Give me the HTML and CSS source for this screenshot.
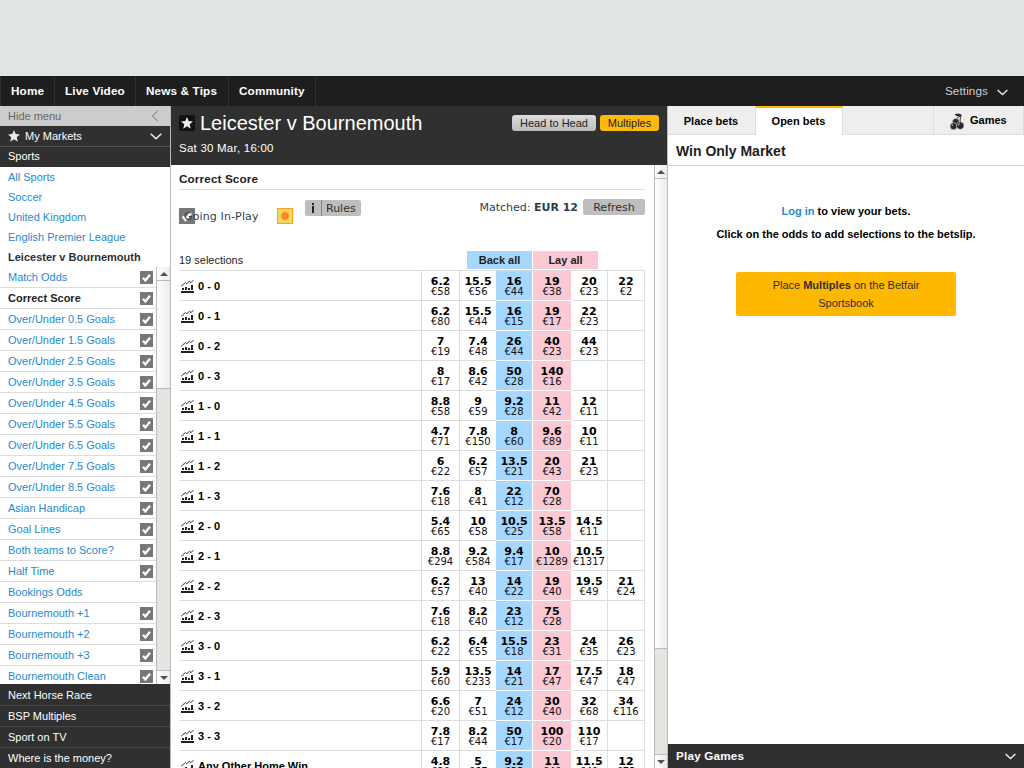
FILE: index.html
```html
<!DOCTYPE html>
<html lang="en">
<head>
<meta charset="utf-8">
<title>Leicester v Bournemouth</title>
<link rel="stylesheet" href="styles.css">
</head>
<body>
<svg class="defs" width="0" height="0">
<symbol id="check" viewBox="0 0 13 13"><path fill="#777" d="M0 0h13v13H0z"/><path d="M3 6.800l2.300 2.600L10 3.700" fill="none" stroke="#fff" stroke-width="2.300"/></symbol>
<symbol id="graph" viewBox="0 0 13 13"><path d="M0 11h13v2H0zM1 8h2v2H1zM4 7h2v3H4zM7 8h2v2H7zM10 5h2v5h-2z" fill="#222"/><path d="M.3 6.200L4.500 2.500 5.800 3.800 8.500 1.200 9.700 2.700 12.700.2" fill="none" stroke="#222" stroke-width=".9"/></symbol>
<symbol id="star" viewBox="0 0 12 12"><path d="M6 0l1.700 4.100 4.300.3-3.300 2.800 1.100 4.500L6 9.300l-3.800 2.400 1.100-4.500L0 4.400l4.300-.3z" fill="#e8eceb"/></symbol>
<symbol id="down" viewBox="0 0 12 7"><path d="M.7.7L6 5.800 11.300.7" fill="none" stroke="#eee" stroke-width="1.500"/></symbol>
</svg>
<div class="page">
<div class="banner"></div>
<nav class="nav"><a>Home</a><a>Live Video</a><a>News &amp; Tips</a><a>Community</a><span class="settings">Settings<svg width="11" height="7"><use href="#down"/></svg></span></nav>
<div class="columns">
<aside class="side">
<div class="hide">Hide menu<svg width="8" height="12" viewBox="0 0 8 12"><path d="M7 .7L1.200 6 7 11.300" fill="none" stroke="#999" stroke-width="1.200"/></svg></div>
<div class="dark my"><svg width="12" height="12"><use href="#star"/></svg><span>My Markets</span><svg class="end" width="12" height="7"><use href="#down"/></svg></div>
<div class="dark sports">Sports</div>
<div class="crumbs"><a>All Sports</a><a>Soccer</a><a>United Kingdom</a><a>English Premier League</a><b>Leicester v Bournemouth</b></div>
<div class="marketwrap">
<ul class="markets">
<li>Match Odds<svg><use href="#check"/></svg></li>
<li class="on">Correct Score<svg><use href="#check"/></svg></li>
<li>Over/Under 0.5 Goals<svg><use href="#check"/></svg></li>
<li>Over/Under 1.5 Goals<svg><use href="#check"/></svg></li>
<li>Over/Under 2.5 Goals<svg><use href="#check"/></svg></li>
<li>Over/Under 3.5 Goals<svg><use href="#check"/></svg></li>
<li>Over/Under 4.5 Goals<svg><use href="#check"/></svg></li>
<li>Over/Under 5.5 Goals<svg><use href="#check"/></svg></li>
<li>Over/Under 6.5 Goals<svg><use href="#check"/></svg></li>
<li>Over/Under 7.5 Goals<svg><use href="#check"/></svg></li>
<li>Over/Under 8.5 Goals<svg><use href="#check"/></svg></li>
<li>Asian Handicap<svg><use href="#check"/></svg></li>
<li>Goal Lines<svg><use href="#check"/></svg></li>
<li>Both teams to Score?<svg><use href="#check"/></svg></li>
<li>Half Time<svg><use href="#check"/></svg></li>
<li>Bookings Odds</li>
<li>Bournemouth +1<svg><use href="#check"/></svg></li>
<li>Bournemouth +2<svg><use href="#check"/></svg></li>
<li>Bournemouth +3<svg><use href="#check"/></svg></li>
<li>Bournemouth Clean<svg><use href="#check"/></svg></li>
</ul>
<div class="scroll small"><i class="up"></i><i class="thumb"></i><i class="track"></i><i class="dn"></i></div>
</div>
<div class="links"><a>Next Horse Race</a><a>BSP Multiples</a><a>Sport on TV</a><a>Where is the money?</a></div>
</aside>
<main class="main">
<header class="event">
<div class="titlerow"><span class="fav"><svg width="12" height="12"><use href="#star"/></svg></span><h1>Leicester v Bournemouth</h1><span class="btn grey">Head to Head</span><span class="btn gold">Multiples</span></div>
<div class="date">Sat 30 Mar, 16:00</div>
</header>
<div class="body">
<section class="market">
<h2>Correct Score</h2>
<div class="info">
<div class="inplay"><svg width="16" height="16" viewBox="0 0 13 13"><use href="#check"/></svg><span>Going In-Play</span></div>
<i class="dot"></i>
<span class="rules"><b></b><span>Rules</span></span>
<span class="matched">Matched: <b>EUR 12</b></span><span class="refresh">Refresh</span>
</div>
<div class="allrow"><span class="count">19 selections</span><b class="backall">Back all</b><b class="layall">Lay all</b></div>
<table class="odds">
<colgroup><col class="cn"><col class="c1"><col class="c2"><col class="c3"><col class="c4"><col class="c5"><col class="c6"></colgroup>
<tr><th><svg><use href="#graph"/></svg>0 - 0</th><td><b>6.2</b>€58</td><td><b>15.5</b>€56</td><td><b>16</b>€44</td><td><b>19</b>€38</td><td><b>20</b>€23</td><td><b>22</b>€2</td></tr>
<tr><th><svg><use href="#graph"/></svg>0 - 1</th><td><b>6.2</b>€80</td><td><b>15.5</b>€44</td><td><b>16</b>€15</td><td><b>19</b>€17</td><td><b>22</b>€23</td><td></td></tr>
<tr><th><svg><use href="#graph"/></svg>0 - 2</th><td><b>7</b>€19</td><td><b>7.4</b>€48</td><td><b>26</b>€44</td><td><b>40</b>€23</td><td><b>44</b>€23</td><td></td></tr>
<tr><th><svg><use href="#graph"/></svg>0 - 3</th><td><b>8</b>€17</td><td><b>8.6</b>€42</td><td><b>50</b>€28</td><td><b>140</b>€16</td><td></td><td></td></tr>
<tr><th><svg><use href="#graph"/></svg>1 - 0</th><td><b>8.8</b>€58</td><td><b>9</b>€59</td><td><b>9.2</b>€28</td><td><b>11</b>€42</td><td><b>12</b>€11</td><td></td></tr>
<tr><th><svg><use href="#graph"/></svg>1 - 1</th><td><b>4.7</b>€71</td><td><b>7.8</b>€150</td><td><b>8</b>€60</td><td><b>9.6</b>€89</td><td><b>10</b>€11</td><td></td></tr>
<tr><th><svg><use href="#graph"/></svg>1 - 2</th><td><b>6</b>€22</td><td><b>6.2</b>€57</td><td><b>13.5</b>€21</td><td><b>20</b>€43</td><td><b>21</b>€23</td><td></td></tr>
<tr><th><svg><use href="#graph"/></svg>1 - 3</th><td><b>7.6</b>€18</td><td><b>8</b>€41</td><td><b>22</b>€12</td><td><b>70</b>€28</td><td></td><td></td></tr>
<tr><th><svg><use href="#graph"/></svg>2 - 0</th><td><b>5.4</b>€65</td><td><b>10</b>€58</td><td><b>10.5</b>€25</td><td><b>13.5</b>€58</td><td><b>14.5</b>€11</td><td></td></tr>
<tr><th><svg><use href="#graph"/></svg>2 - 1</th><td><b>8.8</b>€294</td><td><b>9.2</b>€584</td><td><b>9.4</b>€17</td><td><b>10</b>€1289</td><td><b>10.5</b>€1317</td><td></td></tr>
<tr><th><svg><use href="#graph"/></svg>2 - 2</th><td><b>6.2</b>€57</td><td><b>13</b>€40</td><td><b>14</b>€22</td><td><b>19</b>€40</td><td><b>19.5</b>€49</td><td><b>21</b>€24</td></tr>
<tr><th><svg><use href="#graph"/></svg>2 - 3</th><td><b>7.6</b>€18</td><td><b>8.2</b>€40</td><td><b>23</b>€12</td><td><b>75</b>€28</td><td></td><td></td></tr>
<tr><th><svg><use href="#graph"/></svg>3 - 0</th><td><b>6.2</b>€22</td><td><b>6.4</b>€55</td><td><b>15.5</b>€18</td><td><b>23</b>€31</td><td><b>24</b>€35</td><td><b>26</b>€23</td></tr>
<tr><th><svg><use href="#graph"/></svg>3 - 1</th><td><b>5.9</b>€60</td><td><b>13.5</b>€233</td><td><b>14</b>€21</td><td><b>17</b>€47</td><td><b>17.5</b>€47</td><td><b>18</b>€47</td></tr>
<tr><th><svg><use href="#graph"/></svg>3 - 2</th><td><b>6.6</b>€20</td><td><b>7</b>€51</td><td><b>24</b>€12</td><td><b>30</b>€40</td><td><b>32</b>€68</td><td><b>34</b>€116</td></tr>
<tr><th><svg><use href="#graph"/></svg>3 - 3</th><td><b>7.8</b>€17</td><td><b>8.2</b>€44</td><td><b>50</b>€17</td><td><b>100</b>€20</td><td><b>110</b>€17</td><td></td></tr>
<tr><th><svg><use href="#graph"/></svg>Any Other Home Win</th><td><b>4.8</b>€20</td><td><b>5</b>€67</td><td><b>9.2</b>€33</td><td><b>11</b>€40</td><td><b>11.5</b>€41</td><td><b>12</b>€73</td></tr>
</table>
</section>
<div class="scroll big"><i class="up"></i><i class="thumb"></i><i class="track"></i><i class="dn"></i></div>
</div>
</main>
<aside class="slip">
<div class="tabs"><b class="t1">Place bets</b><b class="t2">Open bets</b><span class="gap"></span><b class="t3"><svg width="14" height="17" viewBox="0 0 14 17"><path d="M4.800 1.500C7-.2 10.500 0 12 2.600 9 3.800 6.300 3.600 4.800 1.500z" fill="#2b2b2b"/><path d="M11.200 2.500C8 4 5.500 6 5 9M11.200 2.500C10 5 10 7 10.300 10" fill="none" stroke="#2b2b2b"/><g fill="#2b2b2b" stroke="#eee" stroke-width=".5"><circle cx="5.800" cy="8.800" r="3.400"/><circle cx="3.500" cy="13.200" r="3.500"/><circle cx="10.200" cy="12.600" r="3.800"/></g><path d="M8.300 12.500q0-1.500 1.500-1.900M1.900 13.200q0-1.200 1.100-1.600" stroke="#ddd" fill="none"/></svg>Games</b></div>
<h3>Win Only Market</h3>
<div class="slipbody"><p><a>Log in</a> to view your bets.</p><p>Click on the odds to add selections to the betslip.</p>
<div class="cta">Place <b>Multiples</b> on the Betfair<br>Sportsbook</div></div>
<div class="play"><span>Play Games</span><svg width="11" height="7"><use href="#down"/></svg></div>
</aside>
</div>
</div>
</body>
</html>
```
FILE: styles.css
```css
* { box-sizing: border-box; }
body { margin: 0; font: 11px/20px "Liberation Sans", Arial, sans-serif; color: #1e1e1e; }
.defs { display: block; }
svg { display: block; flex: none; }
.page { width: 1024px; height: 768px; overflow: hidden; display: flex; flex-direction: column; background: #fff; }
.banner { height: 76px; background: #dfe5e5; flex: none; }
.nav { height: 30px; flex: none; background: #1e1e1e; color: #fff; display: flex; line-height: 30px; border-left: 1px solid #303030; }
.nav a { padding: 0 0 0 10px; border-right: 1px solid #303030; font-weight: bold; font-size: 11.7px; letter-spacing: .16px; white-space: nowrap; }
.nav a:nth-child(1) { width: 54px; }
.nav a:nth-child(2) { width: 81px; }
.nav a:nth-child(3) { width: 93px; }
.nav a:nth-child(4) { width: 87px; }
.settings { margin-left: auto; display: flex; align-items: center; gap: 9px; padding-right: 16px; color: #ccc; font-size: 11.7px; letter-spacing: .1px; }
.settings svg { margin-top: 3px; }
.columns { flex: 1; display: flex; min-height: 0; }
.side { width: 171px; border-right: 1px solid #bbb; display: flex; flex-direction: column; }
.side > div { flex: none; }
.hide { height: 20px; background: #ccc; color: #666; padding: 0 11px 0 8px; display: flex; align-items: center; justify-content: space-between; }
.dark { background: #303030; color: #fff; padding-left: 8px; height: 20px; }
.my { display: flex; align-items: center; gap: 5px; height: 21px; border-bottom: 1px solid #555; }
.sports { line-height: 18px; }
.end { margin: 0 8px 0 auto; }
.crumbs { display: flex; flex-direction: column; padding-left: 8px; color: #2789ce; }
.crumbs b { color: #303030; }
.marketwrap { height: 417px; overflow: hidden; display: flex; }
.markets { list-style: none; margin: 0; padding: 0; width: 156px; color: #2789ce; }
.markets li { height: 21px; border-bottom: 1px solid #ddd; padding: 0 3px 0 8px; display: flex; align-items: center; justify-content: space-between; }
.markets svg { width: 13px; height: 13px; }
.markets .on { color: #1e1e1e; font-weight: bold; }
.links { height: 84px; background: #303030; color: #fff; padding-top: 1px; }
.links a { display: block; height: 21px; line-height: 21px; padding-left: 8px; border-bottom: 1px solid #4a4a4a; }
.links a:last-child { border-bottom: 0; height: 20px; }
.scroll { border-left: 1px solid #bbb; display: flex; flex-direction: column; background: #e4e4e0; }
.scroll i { display: block; flex: none; width: 100%; }
.scroll .track { flex: 1; }
.up, .dn, .thumb { background: linear-gradient(90deg, #fff, #ecebe7); }
.up, .thumb { border-bottom: 1px solid #bbb; }
.dn { border-top: 1px solid #bbb; }
.up, .dn { height: 14px; }
.scroll .up, .scroll .dn { display: flex; align-items: center; justify-content: center; }
.up::before, .dn::before { content: ""; border: 4px solid transparent; border-top-width: 0; border-bottom: 4px solid #505050; }
.dn::before { transform: rotate(180deg); }
.small { width: 14px; }
.small .thumb { height: 108px; }
.big { width: 13px; }
.big .thumb { height: 470px; }
.main { width: 496px; display: flex; flex-direction: column; }
.event { height: 59px; flex: none; background: #303030; color: #fff; padding: 7px 8px 0; }
.titlerow { display: flex; align-items: center; height: 20px; }
.fav { width: 16px; height: 16px; border-radius: 2px; background: #111; display: flex; align-items: center; justify-content: center; }
h1 { font-size: 20px; font-weight: normal; margin: 0 auto 0 5px; white-space: nowrap; line-height: 22px; }
.btn { height: 16px; line-height: 16px; border-radius: 3px; color: #1e1e1e; text-align: center; }
.grey { width: 84px; background: linear-gradient(#ddd, #bbb); margin-right: 4px; }
.gold { width: 59px; background: #ffb80c; }
.date { font-size: 11.5px; letter-spacing: .23px; line-height: 20px; margin-top: 5px; white-space: nowrap; }
.body { flex: 1; min-height: 0; display: flex; }
.market { flex: 1; padding: 0 9px 0 8px; overflow: hidden; }
h2 { font-size: 11.7px; letter-spacing: .14px; line-height: 28px; height: 25px; margin: 0; border-bottom: 1px solid #ddd; }
.info { height: 60px; display: flex; align-items: flex-start; padding-top: 9px; font: 11px/18px "DejaVu Sans", sans-serif; color: #303030; }
.inplay { width: 98px; margin-top: 9px; display: flex; color: #2a3f50; white-space: nowrap; }
.inplay span { margin-left: -11px; letter-spacing: .13px; }
.dot { width: 16px; height: 16px; margin: 9px 12px 0 0; border: 1px solid #ffa01f; background: radial-gradient(circle, #ff8a27 0 3.700px, #f6d65c 4.200px); }
.rules { width: 56px; height: 16px; margin-top: 1px; display: flex; background: #bebebe; border-radius: 2px; }
.rules b { width: 17px; height: 16px; border-right: 1px solid #888; background: linear-gradient(#222, #222) 7px 3px / 2px 2px no-repeat, linear-gradient(#222, #222) 7px 6px / 2px 7px no-repeat; }
.rules span { margin-left: 4px; }
.matched { margin-left: auto; color: #2a3f50; }
.refresh { width: 62px; height: 16px; margin-left: 5px; text-align: center; background: #bebebe; border-radius: 2px; }
.allrow { height: 21px; display: flex; line-height: 18px; border-bottom: 1px solid #ddd; padding-top: 1px; }
.count { width: 288px; }
.backall, .layall { width: 65px; height: 18px; text-align: center; }
.backall { background: #a6d8ff; margin-right: 1px; }
.layall { background: #fac9d4; }
.odds { width: 466px; table-layout: fixed; border-collapse: separate; border-spacing: 0; }
.cn { width: 243px; } .c1 { width: 38px; } .c2 { width: 36px; } .c3 { width: 37px; } .c4 { width: 38px; } .c5 { width: 37px; } .c6 { width: 37px; }
.odds tr { height: 30px; }
.odds th, .odds td { padding: 0; height: 30px; border-bottom: 1px solid #ddd; }
.odds th { text-align: left; vertical-align: top; font-size: 11px; line-height: 30px; border-right: 1px solid #ddd; color: #000; white-space: nowrap; }
.odds th { height: 30px; padding-top: 1px; line-height: 28px; }
.odds th svg { width: 13px; height: 13px; float: left; margin: 8px 4px 0 2px; }
.odds td { text-align: center; vertical-align: top; padding-top: 6px; font: 10px/10px "DejaVu Sans", sans-serif; color: #111; white-space: nowrap; }
.odds td b { display: block; font-size: 11px; color: #000; }
.odds td:nth-child(2), .odds td:nth-child(6), .odds td:nth-child(7) { border-right: 1px solid #ddd; }
.odds td:nth-child(4) { background: #a6d8ff; border-color: #fff; border-right: 1px solid #fff; }
.odds td:nth-child(5) { background: #fac9d4; border-color: #fff; }
.slip { width: 357px; border-left: 1px solid #bbb; display: flex; flex-direction: column; }
.tabs { display: flex; height: 29px; line-height: 30px; color: #000; flex: none; }
.tabs > * { background: #eee; border-bottom: 1px solid #ddd; border-right: 1px solid #ddd; text-align: center; }
.tabs .t1 { width: 88px; padding-right: 1px; }
.tabs .t2 { width: 87px; background: #fff; border-bottom: 0; border-top: 2px solid #ffb80c; line-height: 26px; padding-right: 1px; }
.gap { width: 91px; }
.t3 { flex: 1; display: flex; align-items: center; gap: 6px; padding-left: 16px; }
.t3 svg { margin-top: 3px; }
h3 { margin: 0; height: 31px; line-height: 32px; flex: none; font-size: 14px; padding-left: 8px; border-bottom: 1px solid #ccd0dd; }
.slipbody { flex: 1; text-align: center; font-weight: bold; color: #000; padding-top: 35px; }
.slipbody p { margin: 0 0 3px; }
.slipbody a { color: #2789ce; }
.cta { width: 220px; height: 44px; margin: 28px auto 0; border-radius: 2px; background: #ffb800; line-height: 18px; padding-top: 4px; font-weight: normal; color: #303030; }
.play { height: 24px; flex: none; background: #303030; color: #fff; padding: 0 8px; display: flex; align-items: center; justify-content: space-between; font-size: 11.7px; font-weight: bold; letter-spacing: .2px; }
```
